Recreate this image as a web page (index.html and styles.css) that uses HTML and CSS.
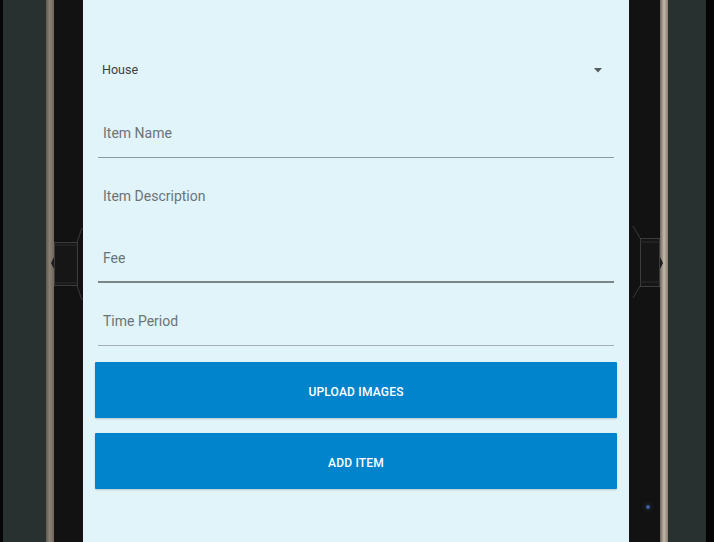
FILE: index.html
```html
<!DOCTYPE html>
<html>
<head>
<meta charset="utf-8">
<link rel="stylesheet" href="styles.css">
</head>
<body>
<div class="device">
  <div class="edge edge-left"></div>
  <div class="shell"></div>
  <div class="rail rail-left"></div>
  <div class="bezel bezel-left">
    <svg class="bracket bracket-left" width="29" height="90" viewBox="0 0 29 90">
      <path d="M28 2 L23 16 M23 60 L28 74" stroke="#3a3a3a" stroke-width="1" fill="none"/>
      <rect x="0.5" y="16.5" width="23" height="43" fill="#161616" stroke="#3c3c3c" stroke-width="1"/>
      <path d="M1 19 H23 M1 57 H23" stroke="#2c2c2c" stroke-width="1"/>
    </svg>
  </div>
  <main class="screen">
    <div class="select">
      <span class="select-value">House</span>
      <svg class="caret" width="8" height="5" viewBox="0 0 8 5"><path d="M0 0 H8 L4 4.5 Z" fill="#555c5e"/></svg>
    </div>
    <div class="fields">
      <div class="field line-soft"><span class="label">Item Name</span></div>
      <div class="field line-none"><span class="label">Item Description</span></div>
      <div class="field line-strong"><span class="label">Fee</span></div>
      <div class="field line-light"><span class="label">Time Period</span></div>
    </div>
    <div class="actions">
      <button class="btn">UPLOAD IMAGES</button>
      <button class="btn">ADD ITEM</button>
    </div>
  </main>
  <div class="bezel bezel-right">
    <svg class="bracket bracket-right" width="31" height="90" viewBox="0 0 31 90">
      <path d="M4 2 L11 14 M11 62 L4 74" stroke="#3a3a3a" stroke-width="1" fill="none"/>
      <rect x="11.5" y="14.5" width="19" height="48" fill="#161616" stroke="#3c3c3c" stroke-width="1"/>
      <path d="M11 18 H31 M11 58 H31" stroke="#2c2c2c" stroke-width="1"/>
    </svg>
    <span class="camera"></span>
  </div>
  <div class="rail rail-right"></div>
  <div class="shell shell-right"></div>
  <div class="edge edge-right"></div>
</div>
</body>
</html>
```
FILE: styles.css
```css
html, body {
  margin: 0;
  padding: 0;
  width: 714px;
  height: 542px;
  overflow: hidden;
  background: #000;
}

.device {
  display: flex;
  width: 714px;
  height: 542px;
}

.edge {
  width: 3px;
  background: #050505;
}
.edge-right {
  width: 8px;
}

.shell {
  width: 43px;
  background: #293030;
}
.shell-right {
  width: 38px;
}

.rail {
  width: 8px;
  position: relative;
}
.rail-left {
  background: linear-gradient(90deg, #5f584f 0%, #8a8175 45%, #6f675d 100%);
}
.rail-right {
  background: linear-gradient(90deg, #6f675d 0%, #c2b8aa 50%, #857c70 100%);
}
.rail-left::after,
.rail-right::after {
  content: "";
  position: absolute;
  top: 257px;
  width: 0;
  height: 0;
  border-top: 6px solid transparent;
  border-bottom: 6px solid transparent;
}
.rail-left::after {
  right: 0;
  border-right: 3px solid #1c1c1c;
}
.rail-right::after {
  left: 0;
  border-left: 3px solid #1c1c1c;
}

.bezel {
  width: 29px;
  background: #121212;
  position: relative;
}
.bezel-right {
  width: 31px;
}

.bracket {
  position: absolute;
  display: block;
}
.bracket-left {
  left: 0;
  top: 226px;
}
.bracket-right {
  left: 0;
  top: 224px;
}

.camera {
  position: absolute;
  left: 17px;
  top: 505px;
  width: 4px;
  height: 4px;
  border-radius: 50%;
  background: #3b5f95;
  box-shadow: 0 0 4px 1px #1d2a3c;
}

.screen {
  width: 546px;
  box-sizing: border-box;
  background: #e1f4fa;
  padding: 0 12px;
  display: flex;
  flex-direction: column;
  font-family: Roboto, "Liberation Sans", sans-serif;
}

.select {
  height: 95.5px;
  box-sizing: border-box;
  padding: 62px 15px 0 7px;
  display: flex;
  justify-content: space-between;
  align-items: flex-start;
}

.select-value {
  font-size: 12.5px;
  line-height: 16px;
  color: #3a3f41;
}

.caret {
  margin-top: 6px;
  display: block;
}

.fields {
  margin: 0 3px;
  display: flex;
  flex-direction: column;
}

.field {
  height: 62.5px;
  box-sizing: border-box;
  display: flex;
  flex-direction: column;
  justify-content: flex-end;
  padding: 0 5px 16px;
  border-bottom: 1px solid transparent;
}

.line-soft {
  border-bottom-color: #8e9a9d;
}
.line-strong {
  border-bottom: 2px solid #7b8588;
  padding-bottom: 15px;
}
.line-light {
  border-bottom-color: #a5b1b4;
}

.label {
  font-size: 14px;
  line-height: 16px;
  color: #6c7375;
}

.actions {
  margin-top: 16.5px;
  display: flex;
  flex-direction: column;
  gap: 15px;
}

.btn {
  height: 56px;
  border: none;
  border-radius: 1px;
  background: #0284cc;
  color: #ffffff;
  font-family: Roboto, "Liberation Sans", sans-serif;
  font-size: 12px;
  font-weight: 500;
  letter-spacing: 0.2px;
  box-shadow: 0 1px 2px rgba(0, 0, 0, 0.18);
  padding: 3px 0 0;
}
```
